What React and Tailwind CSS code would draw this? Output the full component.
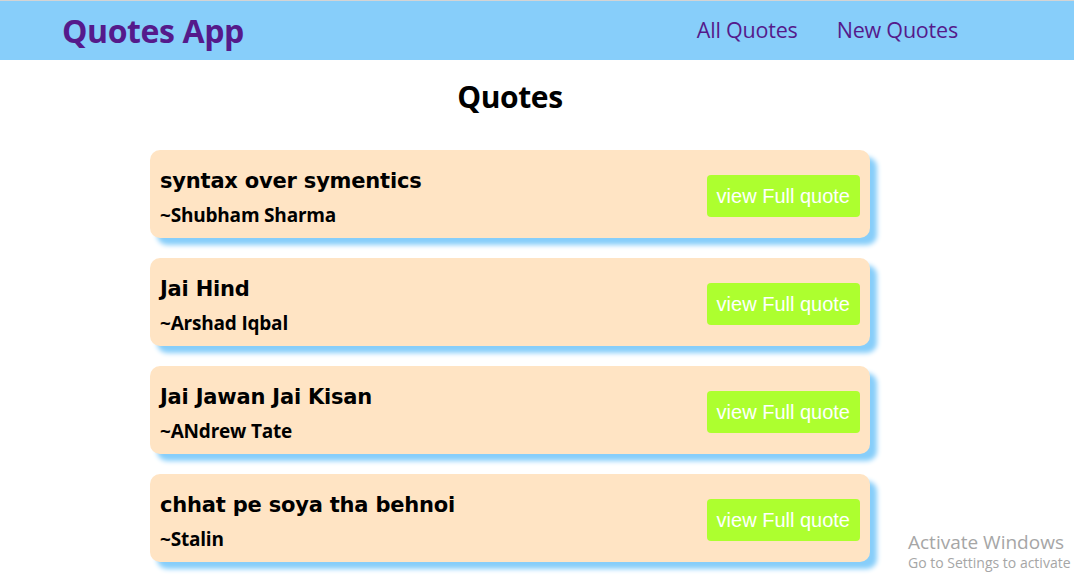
import React from "react";

const quotes = [
  { text: "syntax over symentics", author: "Shubham Sharma" },
  { text: "Jai Hind", author: "Arshad Iqbal" },
  { text: "Jai Jawan Jai Kisan", author: "ANdrew Tate" },
  { text: "chhat pe soya tha behnoi", author: "Stalin" },
];

function Navbar() {
  return (
    <nav className="flex items-center justify-between h-[60px] bg-[#87cefa] border-t border-[#d4d4d4] pl-[62px] pr-[116px]">
      <h1 className="text-[32px] font-bold text-[#551a8b] font-['Open_Sans',sans-serif] tracking-[-0.4px]">
        Quotes App
      </h1>
      <div className="flex gap-[39px] text-[21.5px] text-[#551a8b] font-['Open_Sans',sans-serif] tracking-[-0.2px]">
        <a href="#">All Quotes</a>
        <a href="#">New Quotes</a>
      </div>
    </nav>
  );
}

function QuoteCard({ quote }) {
  return (
    <div className="flex items-center justify-between h-[88px] rounded-[10px] bg-[#ffe4c4] pl-[10px] pr-[10px] shadow-[7px_7px_5px_#87cefa]">
      <div className="flex flex-col pt-[5px]">
        <p className="text-[21px] leading-[28px] font-bold text-black font-['DejaVu_Sans',sans-serif] tracking-[-0.2px]">
          {quote.text}
        </p>
        <p className="mt-[9px] text-[19px] leading-[22px] font-bold text-black font-['Open_Sans',sans-serif] tracking-[-0.2px]">
          ~{quote.author}
        </p>
      </div>
      <button className="mt-[4px] h-[42px] px-[10px] rounded-[4px] bg-[#adff2f] text-white text-[20px] font-['Liberation_Sans',sans-serif]">
        view Full quote
      </button>
    </div>
  );
}

export default function App() {
  return (
    <div className="relative min-h-[580px] bg-white">
      <Navbar />
      <main className="ml-[150px] w-[720px]">
        <h2 className="mt-[14px] text-center text-[30px] font-bold text-black font-['Open_Sans',sans-serif] tracking-[-0.4px]">
          Quotes
        </h2>
        <div className="mt-[31px] flex flex-col gap-[20px] pb-[20px]">
          {quotes.map((q, i) => (
            <QuoteCard key={i} quote={q} />
          ))}
        </div>
      </main>
      {/* windows watermark */}
      <div className="absolute left-[908px] top-[530px] text-[#a6a6a6] font-['Open_Sans',sans-serif] whitespace-nowrap">
        <p className="text-[19px] leading-[24px]">Activate Windows</p>
        <p className="text-[14px] leading-[18px]">Go to Settings to activate</p>
      </div>
    </div>
  );
}
